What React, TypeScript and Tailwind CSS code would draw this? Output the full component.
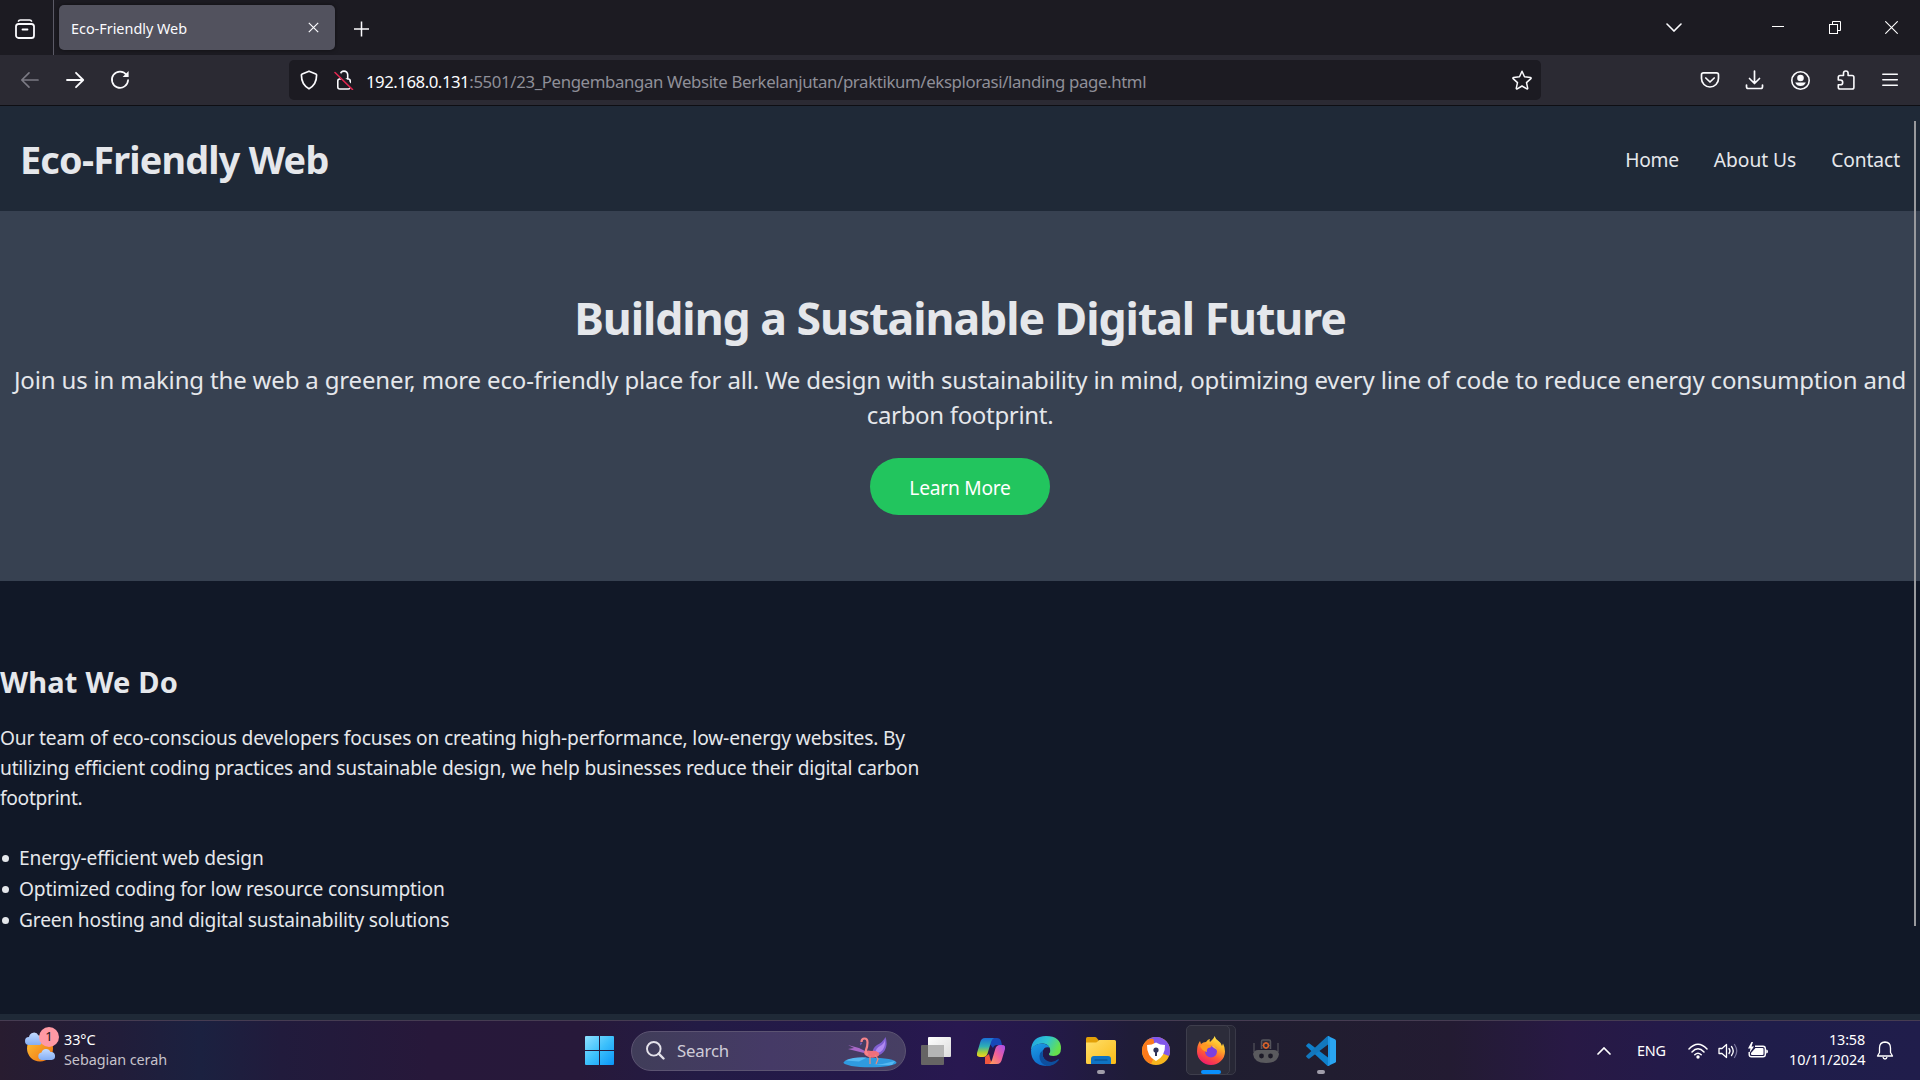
import type { ReactNode } from "react";

function Svg({ w, h, vb, children, className = "" }: { w: number; h: number; vb?: string; children: ReactNode; className?: string }) {
  return (
    <svg width={w} height={h} viewBox={vb ?? `0 0 ${w} ${h}`} fill="none" className={`block shrink-0 ${className}`}>
      {children}
    </svg>
  );
}

const ink = "#fbfbfe";

function TabStrip() {
  return (
    <div className="flex h-[55px] items-stretch bg-[#1c1b22]">
      <div className="flex w-[54px] items-center border-r border-[#5b5a66] pl-[15px] pt-[2px]">
        <Svg w={20} h={20}>
          <path d="M3.2 2.6Q3.8 1 5.4 1h9.2q1.6 0 2.2 1.6" stroke={ink} strokeWidth="1.6" />
          <rect x="1" y="5" width="18" height="14" rx="2.6" stroke={ink} strokeWidth="1.8" />
          <path d="M7.5 10.5h5" stroke={ink} strokeWidth="1.8" strokeLinecap="round" />
        </Svg>
      </div>
      <div className="ml-[5px] mt-[5px] flex h-[45px] w-[276px] items-center rounded-[5px] bg-[#52525e] pl-3 pr-4 shadow-[0_0_4px_rgba(0,0,0,0.5)]">
        <span className="pt-[2px] text-[14.4px] text-[#fbfbfe]">Eco-Friendly Web</span>
        <Svg w={11} h={11} className="ml-auto">
          <path d="M.8.8l9.4 9.4M10.2.8L.8 10.2" stroke={ink} strokeWidth="1.2" />
        </Svg>
      </div>
      <div className="ml-[18px] flex items-center pt-[2px]">
        <Svg w={16} h={16}>
          <path d="M8.5 .5v15M1 8h15" stroke={ink} strokeWidth="1.5" />
        </Svg>
      </div>
      <div className="ml-auto flex items-center pr-[22px]">
        <Svg w={16} h={9} className="mr-[90px]">
          <path d="M1 1l7 7 7-7" stroke={ink} strokeWidth="1.6" strokeLinecap="round" />
        </Svg>
        <Svg w={12} h={13} className="mr-[45px]">
          <path d="M0 5.5h12" stroke="#fff" />
        </Svg>
        <Svg w={12} h={13} className="mr-[44px]">
          <rect x=".5" y="3.5" width="8" height="9" stroke="#fff" />
          <path d="M3.5 3.5v-3h8v9h-3" stroke="#fff" />
        </Svg>
        <Svg w={13} h={13}>
          <path d="M.3.3l12.4 12.4M12.7.3L.3 12.7" stroke="#fff" strokeWidth="1.1" />
        </Svg>
      </div>
    </div>
  );
}

function Toolbar() {
  return (
    <div className="flex h-[51px] items-start border-b border-[#0e0e13] bg-[#2b2a33] pr-[20px] pt-[5px]">
      <div className="flex h-10 w-[289px] items-center pl-[20px]">
        <Svg w={19} h={20}>
          <path d="M18 10H2M9 2.8L1.8 10 9 17.2" stroke="#7b7a84" strokeWidth="1.7" strokeLinecap="round" strokeLinejoin="round" />
        </Svg>
        <Svg w={19} h={20} className="ml-[27px]">
          <path d="M1 10h16M10 2.8l7.2 7.2-7.2 7.2" stroke={ink} strokeWidth="1.8" strokeLinecap="round" strokeLinejoin="round" />
        </Svg>
        <Svg w={20} h={20} className="ml-[25px]">
          <path d="M16.6 5A8.1 8.1 0 1 0 18.1 10" stroke={ink} strokeWidth="1.7" strokeLinecap="round" />
          <path d="M18.6 1v6h-6z" fill={ink} />
        </Svg>
      </div>
      <div className="flex h-10 w-[1252px] items-center rounded-[5px] bg-[#1c1b22] pl-[10px] pr-[9px]">
        <Svg w={20} h={20}>
          <path d="M10 1.200l6.800 2.800c.5.2.8.6.8 1.100 0 6.200-2.500 11-7.600 13.700C4.900 16.100 2.400 11.300 2.400 5.100c0-.5.3-.9.8-1.100z" stroke={ink} strokeWidth="1.7" strokeLinejoin="round" />
        </Svg>
        <Svg w={20} h={20} className="ml-[15px]">
          <path d="M6.300 9V4.800a3.700 3.700 0 0 1 7.400 0V9" stroke={ink} strokeWidth="1.6" />
          <rect x="3.800" y="9" width="12.400" height="10" rx="2" stroke={ink} strokeWidth="1.600" />
          <path d="M1.800 1.500l17.500 17" stroke="#1c1b22" strokeWidth="4" />
          <path d="M1 2.500l17.500 17" stroke="#e22850" strokeWidth="1.600" strokeLinecap="round" />
        </Svg>
        <div className="ml-[12px] whitespace-nowrap pt-[3px] text-[16.800px] text-[#8f8f98]">
          <span className="tracking-[-0.480px] text-[#fbfbfe]">192.168.0.131</span>
          <span className="tracking-[-0.366px]">:5501/23_Pengembangan Website Berkelanjutan/praktikum/eksplorasi/landing page.html</span>
        </div>
        <Svg w={20} h={20} className="ml-auto">
          <path d="M10 1.300l2.500 5.500 6 .7c.6.1.8.7.4 1.100l-4.400 4 1.200 5.600c.1.6-.4.900-.9.700L10 16l-4.800 2.900c-.5.3-1-.1-.9-.7l1.200-5.600-4.400-4c-.4-.4-.2-1 .4-1.100l6-.7z" stroke={ink} strokeWidth="1.500" strokeLinejoin="round" />
        </Svg>
      </div>
      <div className="ml-auto flex h-10 items-center gap-[25px]">
        <Svg w={20} h={20}>
          <path d="M3.500 2.800h13q2 0 2 2v3.700a8.500 8.500 0 0 1-17 0V4.800q0-2 2-2z" stroke={ink} strokeWidth="1.700" />
          <path d="M5.800 8l4.200 4 4.200-4" stroke={ink} strokeWidth="1.700" strokeLinecap="round" strokeLinejoin="round" />
        </Svg>
        <Svg w={20} h={20}>
          <path d="M9.500 1v12M4.500 8.500l5 5 5-5M1.500 15v1.800q0 1.700 1.700 1.700h12.600q1.700 0 1.700-1.700V15" stroke={ink} strokeWidth="1.700" strokeLinecap="round" strokeLinejoin="round" />
        </Svg>
        <Svg w={20} h={20}>
          <circle cx="10.500" cy="10.500" r="8.700" stroke={ink} strokeWidth="1.600" />
          <circle cx="10.500" cy="8" r="3.300" fill={ink} />
          <path d="M5.200 12.500h10.600q-1.500 3.500-5.300 3.500t-5.300-3.500z" fill={ink} />
        </Svg>
        <Svg w={20} h={20}>
          <path d="M3.300 10V7.300q0-1.800 1.800-1.800h3.400V3.300a2.300 2.300 0 0 1 4.600 0v2.200h4q1.800 0 1.800 1.800v9.900q0 1.800-1.800 1.800H5.100q-1.800 0-1.800-1.800v-2.400h2a2.300 2.300 0 0 0 0-4.800z" stroke={ink} strokeWidth="1.600" strokeLinejoin="round" />
        </Svg>
        <Svg w={20} h={20}>
          <path d="M2.800 4.200h14.500M2.800 9.700h14.500M2.800 15.200h14.500" stroke={ink} strokeWidth="1.500" strokeLinecap="round" />
        </Svg>
      </div>
    </div>
  );
}

const services = [
  "Energy-efficient web design",
  "Optimized coding for low resource consumption",
  "Green hosting and digital sustainability solutions",
];

function LandingPage() {
  return (
    <main className="relative h-[914px] overflow-hidden bg-[#111827] text-[#e5e7eb]">
      <header className="flex h-[105px] items-center justify-between bg-[#1f2937] px-[20px] pt-[2px]">
        <h1 className="text-[37.800px] font-bold leading-[60px] tracking-[-0.800px]">Eco-Friendly Web</h1>
        <nav className="flex gap-[35px] text-[19.200px] leading-[30px]">
          <a className="tracking-[-0.250px]">Home</a>
          <a className="tracking-[-0.050px]">About Us</a>
          <a className="tracking-[-0.080px]">Contact</a>
        </nav>
      </header>
      <section className="flex h-[370px] flex-col items-center bg-[#374151] pt-[79px] text-center">
        <h2 className="whitespace-nowrap text-[44.600px] font-bold leading-[56px] tracking-[-1.050px]">Building a Sustainable Digital Future</h2>
        <p className="mt-[16px] whitespace-nowrap text-[24px] leading-[35px] tracking-[-0.161px]">
          Join us in making the web a greener, more eco-friendly place for all. We design with sustainability in mind, optimizing every line of code to reduce energy consumption and
          <br />
          <span className="tracking-[-0.320px]">carbon footprint.</span>
        </p>
        <button className="mt-[26px] h-[57px] w-[180px] rounded-full bg-[#22c55e] pt-[2px] text-[19.200px] leading-[30px] tracking-[-0.250px] text-white">
          Learn More
        </button>
      </section>
      <section className="pt-[80px]">
        <h3 className="text-[29px] font-bold leading-[42px] tracking-[0.200px]">What We Do</h3>
        <p className="mt-[20px] whitespace-nowrap text-[19.200px] leading-[30px] tracking-[-0.166px]">
          Our team of eco-conscious developers focuses on creating high-performance, low-energy websites. By
          <br />
          <span className="tracking-[-0.211px]">utilizing efficient coding practices and sustainable design, we help businesses reduce their digital carbon</span>
          <br />
          <span className="tracking-[-0.300px]">footprint.</span>
        </p>
        <ul className="mt-[29px] text-[19.200px] leading-[31px] tracking-[-0.190px]">
          {services.map((t) => (
            <li key={t} className="flex items-center">
              <span className="ml-[2px] mr-[10px] mt-[1px] h-[7px] w-[7px] rounded-full bg-[#e5e7eb]" />
              {t}
            </li>
          ))}
        </ul>
      </section>
      <div className="absolute bottom-0 left-0 h-[6px] w-full bg-[#1f2937]" />
      <div className="absolute right-[4px] top-[15px] h-[805px] w-[2px] bg-[#98999d]" />
    </main>
  );
}

function Slot({ children, mark }: { children: ReactNode; mark?: boolean }) {
  return (
    <div className="relative flex h-[59px] w-[55px] items-center justify-center">
      {children}
      {mark && <span className="absolute bottom-[6px] left-[23.500px] h-[4px] w-[8px] rounded-full bg-[#a09daa]" />}
    </div>
  );
}

function Flamingo() {
  return (
    <Svg w={54} h={31}>
      <ellipse cx="27" cy="25.500" rx="26.500" ry="4.800" fill="#2f9be0" />
      <path d="M2 23.500q10-4 22-3l-8 4zM30 28q12-1 22-4l-3 4z" fill="#55b9f2" />
      <path d="M30 17q-1-6 4-9 6-3 8.500-8 2.500 7-.5 13-3 5-9 6z" fill="#7f5fd0" />
      <path d="M32 16q1-5 5-7 4-2 5-6 .5 6-2.500 10-3 4-7.500 3z" fill="#b18af0" />
      <path d="M5 8l6 3-6 1 8 2 8 2 3-1-8-4z" fill="#a868c8" />
      <path d="M22 14q4-1 6 0 5-1 8 2 1 3-3 4-6 2-11-2-2-3 0-4z" fill="#ef6f7c" />
      <path d="M18.500 5q0-3.500 3-3.500t3 4q0 4-1.500 7.500-1 3 2 5" stroke="#f5848a" strokeWidth="2.200" />
      <path d="M18 5q-1.500 1-.8 3.500l2-2z" fill="#6d5bb5" />
      <path d="M27 19v8M32 18l3 4-2 5" stroke="#f28a78" strokeWidth="1.200" />
    </Svg>
  );
}

function Taskbar() {
  return (
    <footer className="flex h-[60px] border-t border-[#463c52] bg-[linear-gradient(90deg,#281c30_0px,#211d3a_120px,#1b2140_200px,#211b3c_280px,#27183a_430px,#27193a_580px,#231b45_700px,#24194a_850px,#281850_960px,#24194a_1040px,#1f1c38_1130px,#1f1e30_1200px,#211d30_1330px,#231b32_1450px,#281945_1570px,#241a49_1660px,#1f1d4a_1760px,#201d4b_1920px)]">
      <div className="flex w-[585px] pl-[25px] pt-[6px]">
        <div className="relative h-[36px] w-[34px]">
          <Svg w={34} h={36}>
            <defs>
              <linearGradient id="sun" x1="0" y1="0" x2="1" y2="1"><stop stopColor="#fdc63a" /><stop offset="1" stopColor="#ef6d0c" /></linearGradient>
              <linearGradient id="cld" x1="0" y1="0" x2="0" y2="1"><stop stopColor="#c3dbff" /><stop offset="1" stopColor="#84aef5" /></linearGradient>
            </defs>
            <circle cx="15" cy="21.500" r="13" fill="url(#sun)" />
            <path d="M4 18a4 4 0 0 1 0-8 5 5 0 0 1 9.500-1.500q3 .5 3.500 4t-2 5.500z" fill="url(#cld)" />
            <path d="M16.500 33a3.800 3.800 0 0 1 0-7.500 4.800 4.800 0 0 1 9-.5 4 4 0 0 1 1 8z" fill="url(#cld)" />
          </Svg>
          <span className="absolute left-[14px] top-0 flex h-[20px] w-[20px] items-center justify-center rounded-full bg-[#ff99a4] text-[13px] text-[#1b1216]">1</span>
        </div>
        <div className="ml-[5px] pt-[3px] text-[14.400px] leading-[20px] tracking-[-0.060px]">
          <div className="text-white">33°C</div>
          <div className="text-[#c6c2cb]">Sebagian cerah</div>
        </div>
      </div>
      <div className="flex h-[59px] items-center">
        <Svg w={29} h={29}>
          <defs>
            <linearGradient id="win" gradientUnits="userSpaceOnUse" x1="0" y1="0" x2="29" y2="29"><stop stopColor="#8fe0ff" /><stop offset=".5" stopColor="#3cc0fb" /><stop offset="1" stopColor="#0a95f8" /></linearGradient>
          </defs>
          <path d="M1 0h13v14H0V1q0-1 1-1zM15 0h13q1 0 1 1v13H15zM0 15h14v14H1q-1 0-1-1zM15 15h14v13q0 1-1 1H15z" fill="url(#win)" />
        </Svg>
        <div className="ml-[17px] flex h-[40px] w-[275px] items-center rounded-full border border-[#5c5472] bg-[linear-gradient(90deg,#403d59,#453a66_50%,#473f63)] pl-[14px] pr-[8px]">
          <Svg w={19} h={19}>
            <circle cx="7.800" cy="7.800" r="6.800" stroke="#e4e2ea" strokeWidth="1.900" />
            <path d="M12.700 12.700l4.800 4.800" stroke="#e4e2ea" strokeWidth="2.400" strokeLinecap="round" />
          </Svg>
          <span className="ml-[12px] text-[16.800px] tracking-[-0.180px] text-[#cfccd8]">Search</span>
          <div className="ml-auto pt-[3px]"><Flamingo /></div>
        </div>
      </div>
      <div className="ml-[2.500px] flex">
        <Slot>
          <Svg w={30} h={28}>
            <defs>
              <linearGradient id="tv" x1="0" y1="0" x2="1" y2="1"><stop stopColor="#fff" /><stop offset="1" stopColor="#dcdcdc" /></linearGradient>
            </defs>
            <rect x="0" y="8" width="23" height="20" rx="1" fill="#666464" />
            <rect x="7" y="0" width="23" height="20" rx="1" fill="url(#tv)" />
            <rect x="7" y="8" width="16" height="12" fill="#b5b5b5" />
          </Svg>
        </Slot>
        <Slot>
          <Svg w={28} h={26}>
            <defs>
              <linearGradient id="c1" x1="0" y1="0" x2="0" y2="1"><stop stopColor="#1a6fd8" /><stop offset=".45" stopColor="#2fb0b4" /><stop offset=".75" stopColor="#a5cf3a" /><stop offset="1" stopColor="#f8d21e" /></linearGradient>
              <linearGradient id="c2" x1="1" y1="0" x2="0" y2="1"><stop stopColor="#a44df0" /><stop offset=".5" stopColor="#f0609a" /><stop offset="1" stopColor="#ffa552" /></linearGradient>
            </defs>
            <path d="M8 0h12q3 0 4 3l1 4h-5q-3 0-4 3z" fill="#1748b8" />
            <path d="M8 26h9q-3-1-3.500-4L12 16 8 19z" fill="#f0563f" />
            <path d="M8 0h9q-2 1-3 4l-3 10q-1 5-5 5H3q-4 0-3-4L3 5q1-5 5-5z" fill="url(#c1)" />
            <path d="M20 26h-8q2-1 3-4l3-10q1-5 5-5h2q4 0 3 4l-3 10q-1 5-5 5z" fill="url(#c2)" />
          </Svg>
        </Slot>
        <Slot>
          <Svg w={30} h={30}>
            <defs>
              <linearGradient id="e1" x1="0" y1="0" x2="1" y2=".4"><stop stopColor="#1f9fe6" /><stop offset=".55" stopColor="#2fc6cf" /><stop offset="1" stopColor="#66e04c" /></linearGradient>
              <linearGradient id="e2" x1="0" y1="0" x2=".6" y2="1"><stop stopColor="#1d9fe6" /><stop offset="1" stopColor="#0b62c4" /></linearGradient>
            </defs>
            <path d="M0 14Q1 0 15 0q15 0 15 12.500 0 7.500-7.500 7.500-5 0-4.500-2.200 1.500-1.500 1.200-3.500Q18.500 8 12 7.500 4 7 0 14z" fill="url(#e1)" />
            <path d="M0 14Q3 7.500 11 7.500q6.500.5 7.500 4-5-1.500-6.500 3-2 7 4 11 6 3 11-2Q23 30 15 30 0 29 0 14z" fill="url(#e2)" />
            <path d="M12 14q-2 7 3.500 10.500 5.500 3.500 12-1.500.8.500 0 1.500Q23 30 15.500 30 8 27 8.500 20q.5-4 3.500-6z" fill="#0d4f9e" />
          </Svg>
        </Slot>
        <Slot mark>
          <Svg w={30} h={27}>
            <defs>
              <linearGradient id="fo" x1="0" y1="0" x2="1" y2="1"><stop stopColor="#ffdf6b" /><stop offset="1" stopColor="#fbbb16" /></linearGradient>
            </defs>
            <path d="M0 7V1.500Q0 0 1.500 0H9q1 0 1.600.7L12.500 3v4z" fill="#e3a008" />
            <path d="M0 5.500h9.500Q11 5.500 12 4t2-1h14.500Q30 3 30 4.500v21q0 1.500-1.500 1.500h-27Q0 27 0 25.500z" fill="url(#fo)" />
            <path d="M5 27v-5q0-3 3-3h14q3 0 3 3v5z" fill="#0f73c4" />
            <path d="M9 23h12" stroke="#084a86" strokeWidth="1.200" strokeLinecap="round" />
          </Svg>
        </Slot>
        <Slot>
          <Svg w={28} h={28}>
            <circle cx="14" cy="14" r="14" fill="#f6b51e" />
            <path d="M14 14L6 2.500A14 14 0 0 1 28 14q0 3-1 5z" fill="#8257ea" />
            <path d="M14 16L9 27A14 14 0 0 1 5.500 3q4-2 6-1z" fill="#fb7a1c" />
            <path d="M14 5.500q4 2.500 9 2.500.5 11-9 16Q4.500 19 5 8q5 0 9-2.500z" fill="#fff" />
            <circle cx="14" cy="13" r="2.600" fill="#2f3358" />
            <path d="M13 14h2v5h-2z" fill="#2f3358" />
          </Svg>
        </Slot>
        <div className="relative flex h-[59px] w-[55px] items-center justify-center">
          <span className="absolute left-[8px] top-[4px] h-[50px] w-[44px] rounded-[5px] border border-[#393947] bg-[#272735]" />
          <span className="absolute left-[2.500px] top-[4px] h-[50px] w-[44px] rounded-[5px] border border-[#3e3e4c] bg-[#2c2c3a]" />
          <span className="absolute bottom-[6px] left-[17.500px] h-[4px] w-[20px] rounded-full bg-[#0a8ffc]" />
          <Svg w={28} h={29} className="relative">
            <defs>
              <linearGradient id="ff" x1=".8" y1="0" x2=".3" y2="1"><stop stopColor="#fff14f" /><stop offset=".35" stopColor="#ffb028" /><stop offset=".65" stopColor="#ff5a36" /><stop offset="1" stopColor="#f0186f" /></linearGradient>
            </defs>
            <path d="M17.500 0q1 3 4 5t3.500 5l1-2.500q2 3.500 2 8A14 13.500 0 0 1 0 15.500Q0 9 3 5l1 3q2-2 5-2 2-3 4-3-1 2 0 3l2-2q2-1.500 2.500-4z" fill="url(#ff)" />
            <circle cx="14" cy="15.500" r="6" fill="#7c3fe0" />
            <path d="M3 10q4-3 8-1l4 .5q-1 2.500-4 2.500-2 2-1 4-5-1-7-6z" fill="#ff9a22" />
            <path d="M14 9.500q5 0 6 5-1-2-3-2.500z" fill="#ffbf3c" />
          </Svg>
        </div>
        <Slot>
          <Svg w={26} h={24}>
            <path d="M8.500 10V2.500Q8.500 1 10 1h6q1.500 0 1.500 1.500V10" stroke="#55555c" strokeWidth="1.500" fill="#2f2c38" />
            <path d="M1 4v9M25 4v9" stroke="#4c4b54" strokeWidth="1.400" />
            <circle cx="13" cy="6.500" r="2.400" stroke="#d9622b" strokeWidth="1.500" />
            <path d="M13 3v1M13 9v1M9.500 6.500h1M15.500 6.500h1" stroke="#d9622b" strokeWidth="1" />
            <path d="M5 11h16q4 0 5 4-1 9-13 9T0 15q1-4 5-4z" fill="#5a5a5e" />
            <circle cx="8.500" cy="17" r="2.400" fill="#1d1b28" />
            <circle cx="17.500" cy="17" r="2.400" fill="#1d1b28" />
          </Svg>
        </Slot>
        <Slot mark>
          <Svg w={30} h={30}>
            <path d="M22 0l7 3.200q1 .5 1 1.500v20.600q0 1-1 1.500L22 30z" fill="#2aa5f2" />
            <path d="M22 21.500L3.500 7.500Q2.800 7 2 7.500L.5 9q-.8.800 0 1.600L21 29.500q.5.500 1 .5z" fill="#0f80cc" />
            <path d="M22 8.500L3.500 22.500q-.7.500-1.500 0L.5 21q-.8-.8 0-1.600L21 .5Q21.500 0 22 0z" fill="#1277bd" />
            <path d="M22 0l2 1v28l-2 1z" fill="#1f97e6" />
          </Svg>
        </Slot>
      </div>
      <div className="ml-auto flex h-[59px] items-center pr-[26px] text-white">
        <Svg w={14} h={8}>
          <path d="M1 7l6-6 6 6" stroke="#fff" strokeWidth="1.700" strokeLinecap="round" />
        </Svg>
        <span className="ml-[26px] text-[14.400px] tracking-[-0.100px]">ENG</span>
        <Svg w={20} h={16} className="ml-[22px]">
          <path d="M1 6q9-9.500 18 0M4 9q6-6.500 12 0M6.800 11.800q3.200-3.200 6.400 0" stroke="#fff" strokeWidth="1.500" strokeLinecap="round" />
          <circle cx="10" cy="14" r="1.700" fill="#fff" />
        </Svg>
        <Svg w={20} h={16} className="ml-[10px]">
          <path d="M1 5.500h3L8.500 1.500v13L4 10.500H1z" stroke="#fff" strokeWidth="1.300" strokeLinejoin="round" />
          <path d="M11 5.500q2 2.500 0 5M13.500 3.500q3.500 4.500 0 9" stroke="#fff" strokeWidth="1.300" strokeLinecap="round" />
          <path d="M16.500 1.500q4.500 6.500 0 13" stroke="#77739a" strokeWidth="1.300" strokeLinecap="round" />
        </Svg>
        <Svg w={20} h={17} className="ml-[10px]">
          <path d="M7 4.200h8q2.300 0 2.300 2.300v6q0 2.300-2.300 2.300H3.500q-2.300 0-2.300-2.300V10" stroke="#fff" strokeWidth="1.400" />
          <path d="M7.500 6h7q1 0 1 1v5q0 1-1 1H4q-1 0-1-1v-1z" fill="#fff" />
          <path d="M18.200 7.500q1.800 0 1.800 2t-1.800 2zM3.500 0L0 6.500h2.500L1.500 11 6 4.500H3.500L5 0z" fill="#fff" />
        </Svg>
        <div className="ml-[21px] w-[76px] whitespace-nowrap pb-[2px] text-right text-[14.400px] leading-[20px]">
          <div className="tracking-[-0.160px]">13:58</div>
          <div>10/11/2024</div>
        </div>
        <Svg w={18} h={19} className="ml-[11px]">
          <path d="M9 1Q3.500 1.300 3.500 7v4.500L1.500 15h15l-2-3.500V7Q14.500 1.300 9 1z" stroke="#fff" strokeWidth="1.300" strokeLinejoin="round" />
          <path d="M7 16q.3 2 2 2t2-2" stroke="#fff" strokeWidth="1.300" />
        </Svg>
      </div>
    </footer>
  );
}

export default function App() {
  return (
    <div className="h-[1080px] w-[1920px] overflow-hidden font-['Noto_Sans','Open_Sans',sans-serif]">
      <TabStrip />
      <Toolbar />
      <LandingPage />
      <Taskbar />
    </div>
  );
}
